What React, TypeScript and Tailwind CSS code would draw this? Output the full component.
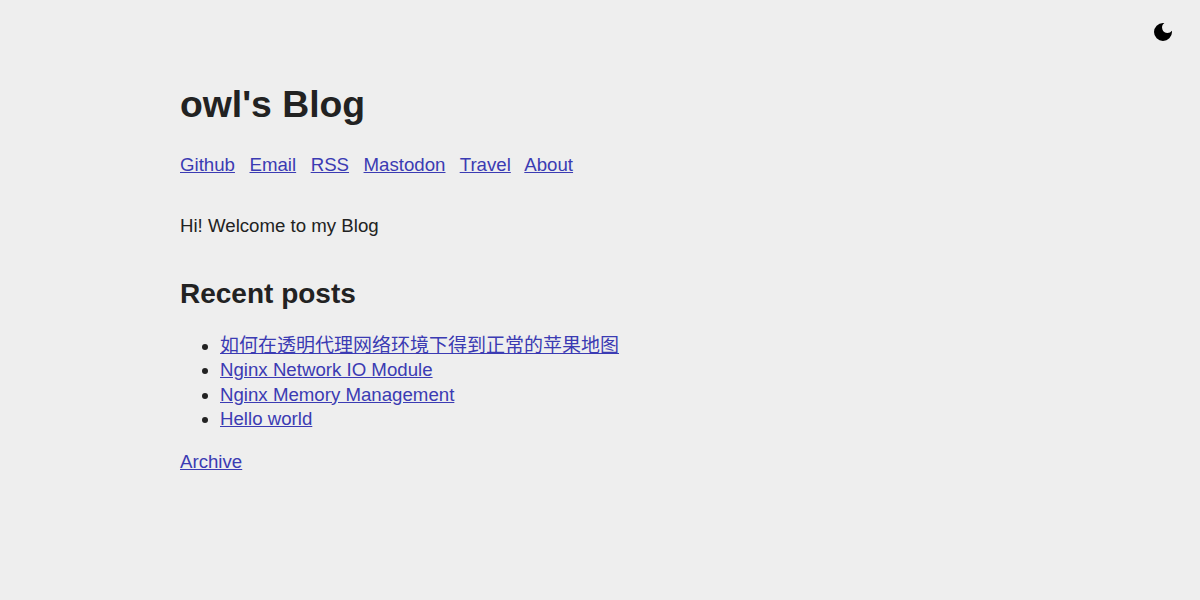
const links = ['Github', 'Email', 'RSS', 'Mastodon', 'Travel', 'About']

const posts = [
  { title: '如何在透明代理网络环境下得到正常的苹果地图', lang: 'zh' },
  { title: 'Nginx Network IO Module', lang: 'en' },
  { title: 'Nginx Memory Management', lang: 'en' },
  { title: 'Hello world', lang: 'en' },
]

function MoonIcon() {
  return (
    <svg className="h-6 w-6" viewBox="0 0 24 24" fill="currentColor" aria-hidden="true">
      <path d="M12 3a9 9 0 1 0 9 9c0-.46-.04-.92-.1-1.36a5.389 5.389 0 0 1-4.4 2.26 5.403 5.403 0 0 1-3.14-9.8c-.44-.06-.9-.1-1.36-.1z" />
    </svg>
  )
}

export default function App() {
  return (
    <div className="relative min-h-screen bg-[#eeeeee] font-['Liberation_Sans','Noto_Sans_CJK_SC',sans-serif] text-[14pt] leading-[1.3] text-[#222222]">
      <button aria-label="Toggle theme" className="absolute top-5 right-[25px] text-black">
        <MoonIcon />
      </button>

      <main className="mx-auto w-[840px] pt-[80px]">
        <h1 className="text-[28pt] leading-[1.3] font-bold">owl's Blog</h1>

        <nav className="mt-6">
          {links.map((label) => (
            <span key={label}>
              <a href="#" className="mr-[0.5em] text-[#3b3bb3] underline">{label}</a>{' '}
            </span>
          ))}
        </nav>

        <p className="mt-[37px]">Hi! Welcome to my Blog</p>

        <h2 className="mt-[38px] text-[21pt] leading-[1.3] font-bold">Recent posts</h2>

        <ul className="mt-[21.6px] list-disc pl-10">
          {posts.map(({ title, lang }) => (
            <li key={title}>
              <a
                href="#"
                lang={lang}
                className={lang === 'zh' ? 'text-[19px] leading-none text-[#3b3bb3] underline' : 'text-[#3b3bb3] underline'}
              >
                {title}
              </a>
            </li>
          ))}
        </ul>

        <p className="mt-[1em]">
          <a href="#" className="text-[#3b3bb3] underline">Archive</a>
        </p>
      </main>
    </div>
  )
}
